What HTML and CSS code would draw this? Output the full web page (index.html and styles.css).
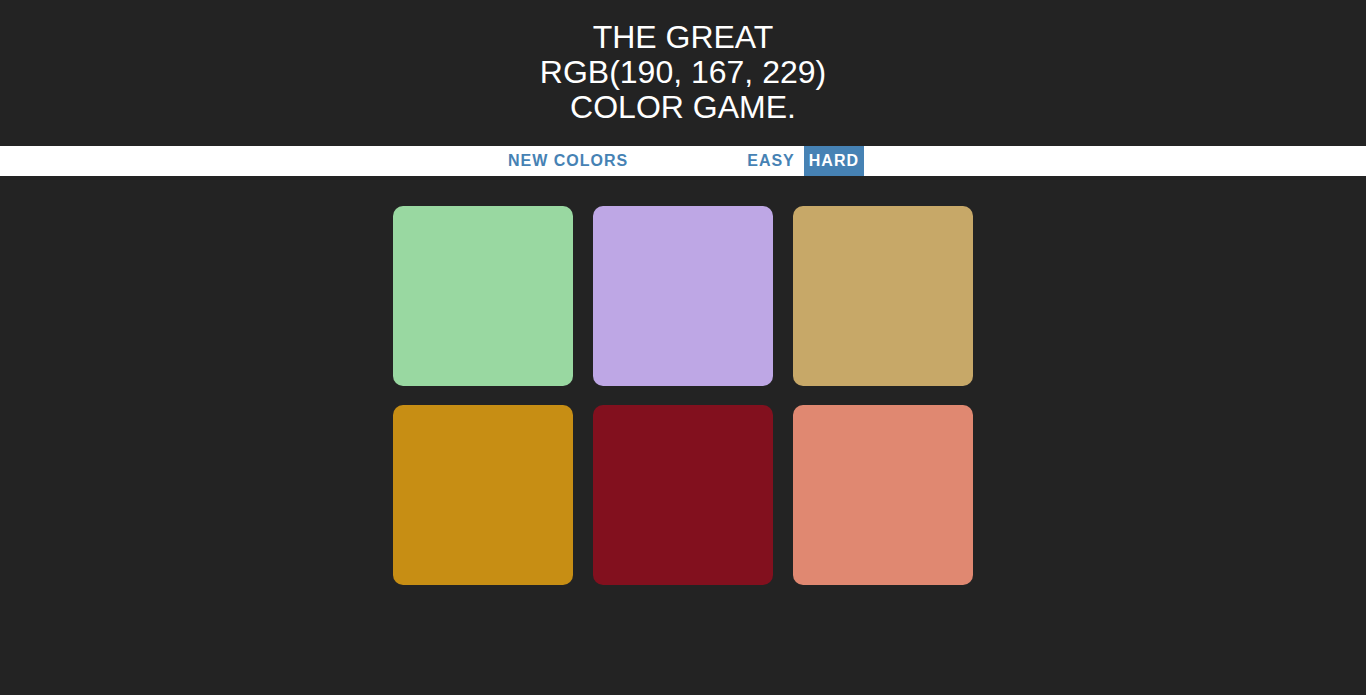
FILE: index.html
```html
<!DOCTYPE html>
<html>
<head>
<meta charset="utf-8">
<title>Color Game</title>
<link rel="stylesheet" href="styles.css">
</head>
<body>
<h1 class="title">The Great<br><span class="rgb">RGB(190, 167, 229)</span><br>Color Game.</h1>
<div class="stripe">
  <button class="btn">New Colors</button>
  <span class="message"></span>
  <button class="btn">Easy</button>
  <button class="btn selected">Hard</button>
</div>
<div class="container">
  <div class="square" style="background: rgb(153, 216, 161);"></div>
  <div class="square" style="background: rgb(190, 167, 229);"></div>
  <div class="square" style="background: rgb(199, 168, 104);"></div>
  <div class="square" style="background: rgb(199, 142, 20);"></div>
  <div class="square" style="background: rgb(130, 16, 30);"></div>
  <div class="square" style="background: rgb(224, 136, 113);"></div>
</div>
</body>
</html>
```
FILE: styles.css
```css
body {
  margin: 0;
  background: #232323;
  font-family: "Liberation Sans", Arial, sans-serif;
}
.title {
  margin: 0;
  padding: 20px 0;
  text-align: center;
  color: #fff;
  font-weight: normal;
  font-size: 32px;
  line-height: 1.1;
  text-transform: uppercase;
  background: #232323;
}
.stripe {
  height: 30px;
  background: #fff;
  display: flex;
  justify-content: center;
  align-items: stretch;
}
.btn {
  border: none;
  background: none;
  margin: 0;
  padding: 0 6px;
  height: 100%;
  font-family: "Liberation Sans", Arial, sans-serif;
  font-size: 16px;
  font-weight: 700;
  letter-spacing: 1px;
  text-transform: uppercase;
  color: steelblue;
  outline: none;
}
.btn.selected {
  color: #fff;
  background: steelblue;
  margin-left: 3px;
  padding: 0 5px;
}
.message {
  display: inline-block;
  width: 107px;
}
.container {
  width: 600px;
  margin: 20px auto;
  display: flex;
  flex-wrap: wrap;
}
.square {
  width: 180px;
  height: 180px;
  margin: 10px;
  border-radius: 10px;
}
.container .square:nth-child(n+4) {
  margin-top: 9px;
}
```
